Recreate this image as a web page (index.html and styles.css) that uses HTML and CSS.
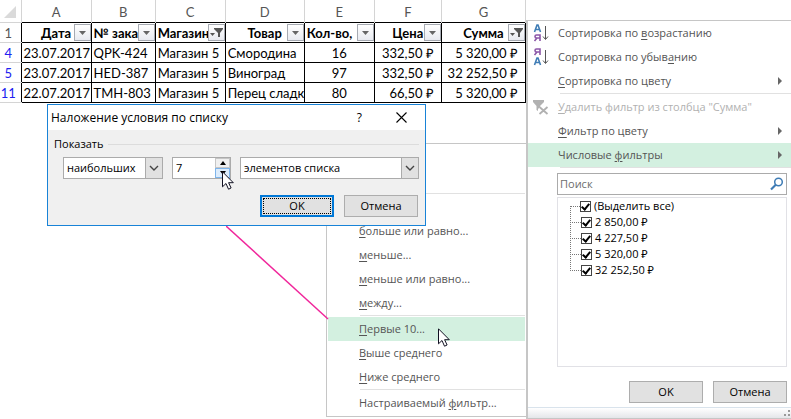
FILE: index.html
```html
<!DOCTYPE html>
<html lang="ru">

<head>
    <meta charset="UTF-8">
    <title>Фильтр по сумме</title>
    <meta name="viewport" content="width=device-width, initial-scale=1.0">
    <link rel="stylesheet" href="styles.css">
</head>

<body>
    <!-- общие значки -->
    <svg class="defs" aria-hidden="true">
        <symbol id="funnel" viewBox="0 0 15 15">
            <path d="M5 3h9v1l-3 4v4H9V8L5 4z" fill="#555"/>
            <path d="M1 8h5L3.500 11z" fill="#555"/>
        </symbol>
        <symbol id="down" viewBox="0 0 15 15">
            <path d="M4 6h7l-3.500 4z" fill="#666"/>
        </symbol>
        <symbol id="chevron" viewBox="0 0 16 20">
            <path d="M4 8l4 4 4-4" fill="none" stroke="#444" stroke-width="1.400"/>
        </symbol>
        <symbol id="cursor" viewBox="0 0 12 19">
            <path d="M.5.8v15l3.500-3.300 2.500 5.700 2.600-1.200-2.500-5.300h4.700z" fill="#fff" stroke="#112"/>
        </symbol>
    </svg>

    <div class="screen">
        <main class="sheet">
            <table>
                <colgroup>
                    <col class="col-num"><col class="col-a"><col class="col-b"><col class="col-c"><col class="col-d"><col class="col-e"><col class="col-f"><col class="col-g">
                </colgroup>
                <thead>
                    <tr class="letters">
                        <th><svg class="corner" viewBox="0 0 12 12"><path d="M12 0v12H0z" fill="#dadada"/></svg></th>
                        <th>A</th><th>B</th><th>C</th><th>D</th><th>E</th><th>F</th><th>G</th>
                    </tr>
                    <tr class="titles">
                        <th class="num first">1</th>
                        <th>Дата<button class="arrow" aria-label="Фильтр"><svg><use href="#down"/></svg></button></th>
                        <th class="left">№ зака<button class="arrow" aria-label="Фильтр"><svg><use href="#down"/></svg></button></th>
                        <th class="left">Магазин<button class="arrow" aria-label="Фильтр"><svg><use href="#funnel"/></svg></button></th>
                        <th>Товар<button class="arrow" aria-label="Фильтр"><svg><use href="#down"/></svg></button></th>
                        <th class="left">Кол-во,<button class="arrow" aria-label="Фильтр"><svg><use href="#down"/></svg></button></th>
                        <th>Цена<button class="arrow" aria-label="Фильтр"><svg><use href="#down"/></svg></button></th>
                        <th>Сумма<button class="arrow" aria-label="Фильтр"><svg><use href="#funnel"/></svg></button></th>
                    </tr>
                </thead>
                <tbody>
                    <tr>
                        <th class="num">4</th>
                        <td class="right">23.07.2017</td><td>QPK-424</td><td>Магазин 5</td><td>Смородина</td>
                        <td class="center">16</td><td class="money">332,50 ₽</td><td class="money">5 320,00 ₽</td>
                    </tr>
                    <tr>
                        <th class="num">5</th>
                        <td class="right">23.07.2017</td><td>HED-387</td><td>Магазин 5</td><td>Виноград</td>
                        <td class="center">97</td><td class="money">332,50 ₽</td><td class="money">32 252,50 ₽</td>
                    </tr>
                    <tr>
                        <th class="num">11</th>
                        <td class="right">22.07.2017</td><td>TMH-803</td><td>Магазин 5</td><td>Перец сладк</td>
                        <td class="center">80</td><td class="money">66,50 ₽</td><td class="money">5 320,00 ₽</td>
                    </tr>
                </tbody>
            </table>
        </main>

        <aside class="filter">
            <div class="menu">
                <button class="item">
                    <svg class="icon" viewBox="0 0 16 18">
                        <path d="M1.500 8L4 1h1l2.500 7M2.500 5.500h4" fill="none" stroke="#3f7cb5" stroke-width="1.600"/>
                        <path d="M7 17v-6H3.500Q2 11 2 12.500T3.500 14H7M4 14l-2.500 3" fill="none" stroke="#8c57a8" stroke-width="1.600"/>
                        <path d="M12.500 2v13M10 12.500l2.500 3 2.500-3" fill="none" stroke="#555"/>
                    </svg>
                    <span>Сортировка по <u>в</u>озрастанию</span>
                </button>
                <button class="item">
                    <svg class="icon" viewBox="0 0 16 18">
                        <path d="M7 7V1H3.500Q2 1 2 2.500T3.500 4H7M4 4L1.500 7" fill="none" stroke="#8c57a8" stroke-width="1.600"/>
                        <path d="M1.500 17L4 10h1l2.500 7M2.500 14.500h4" fill="none" stroke="#3f7cb5" stroke-width="1.600"/>
                        <path d="M12.500 2v13M10 12.500l2.500 3 2.500-3" fill="none" stroke="#555"/>
                    </svg>
                    <span>Сортировка по убыв<u>а</u>нию</span>
                </button>
                <button class="item sub"><span><u>С</u>ортировка по цвету</span></button>
                <hr>
                <button class="item off" disabled>
                    <svg class="icon" viewBox="0 0 16 18">
                        <path d="M0 2h11v2L7 8v1l-2 2v2L3.500 12V8L0 4z" fill="#b1b1b1"/>
                        <path d="M6.500 9l8 7M14.500 9l-8 7" stroke="#b1b1b1" stroke-width="1.800"/>
                    </svg>
                    <span><u>У</u>далить фильтр из столбца "Сумма"</span>
                </button>
                <button class="item sub"><span><u>Ф</u>ильтр по цвету</span></button>
                <button class="item sub active"><span>Числовые <u>ф</u>ильтры</span></button>
                <hr>
            </div>

            <div class="values">
                <div class="search">
                    <input type="text" placeholder="Поиск" aria-label="Поиск">
                    <svg viewBox="0 0 14 14"><circle cx="8.500" cy="5" r="3.800" fill="none" stroke="#3f7cb5" stroke-width="1.500"/><path d="M6 7.500L1 12.500" stroke="#3f7cb5" stroke-width="2.200"/></svg>
                </div>
                <ul class="tree">
                    <li><label><input type="checkbox" checked>(Выделить все)</label></li>
                    <li><label><input type="checkbox" checked>2 850,00 ₽</label></li>
                    <li><label><input type="checkbox" checked>4 227,50 ₽</label></li>
                    <li><label><input type="checkbox" checked>5 320,00 ₽</label></li>
                    <li><label><input type="checkbox" checked>32 252,50 ₽</label></li>
                </ul>
                <div class="buttons">
                    <button class="btn">OK</button>
                    <button class="btn">Отмена</button>
                </div>
            </div>
            <div class="grip">
                <svg viewBox="0 0 8 8"><path d="M5 0h2v2H5zM1 4h2v2H1zM5 4h2v2H5z" fill="#999"/></svg>
            </div>
        </aside>

        <div class="menu submenu">
            <div class="item"></div>
            <div class="item"></div>
            <hr>
            <div class="item"></div>
            <button class="item"><span><u>б</u>ольше или равно...</span></button>
            <button class="item"><span><u>м</u>еньше...</span></button>
            <button class="item"><span><u>м</u>еньше или равно...</span></button>
            <button class="item"><span><u>м</u>ежду...</span></button>
            <hr>
            <button class="item active"><span><u>П</u>ервые 10...</span></button>
            <button class="item"><span><u>В</u>ыше среднего</span></button>
            <button class="item"><span><u>Н</u>иже среднего</span></button>
            <hr>
            <button class="item"><span>Настраиваемый <u>ф</u>ильтр...</span></button>
        </div>

        <svg class="pointer-line" viewBox="0 0 103 94"><path d="M0 0L102 93" stroke="#f0269b" stroke-width="1.500"/></svg>

        <section class="dialog" role="dialog" aria-labelledby="dialogTitle">
            <header>
                <h1 id="dialogTitle">Наложение условия по списку</h1>
                <button aria-label="Справка">?</button>
                <button aria-label="Закрыть"><svg viewBox="0 0 11 11"><path d="M.5.5l10 10M10.500.5l-10 10" stroke="#000" stroke-width="1.100"/></svg></button>
            </header>
            <fieldset>
                <legend>Показать</legend>
                <div class="fields">
                    <div class="drop drop-kind">
                        <select aria-label="Условие"><option>наибольших</option></select>
                        <svg><use href="#chevron"/></svg>
                    </div>
                    <div class="spin">
                        <input type="text" value="7" aria-label="Количество">
                        <div class="spin-buttons">
                            <button aria-label="Больше"><svg viewBox="0 0 6 4"><path d="M0 4l3-4 3 4z"/></svg></button>
                            <button class="hot" aria-label="Меньше"><svg viewBox="0 0 6 4"><path d="M0 0l3 4 3-4z"/></svg></button>
                        </div>
                    </div>
                    <div class="drop drop-unit">
                        <select aria-label="Единицы"><option>элементов списка</option></select>
                        <svg><use href="#chevron"/></svg>
                    </div>
                </div>
            </fieldset>
            <div class="buttons">
                <button class="btn default">OK</button>
                <button class="btn">Отмена</button>
            </div>
        </section>

        <svg class="cursor cursor-spin"><use href="#cursor"/></svg>
        <svg class="cursor cursor-menu"><use href="#cursor"/></svg>
    </div>
</body>

</html>
```

FILE: styles.css
```css
* {
    box-sizing: border-box;
}

body {
    margin: 0;
    background: #fff;
    font-family: "Open Sans", "Noto Sans", sans-serif;
    font-size: 11px;
    line-height: 16px;
    color: #000;
}

button, input, select {
    font: inherit;
    color: inherit;
    margin: 0;
    padding: 0;
    border: 0;
    border-radius: 0;
    background: none;
}

svg {
    display: block;
}

.defs {
    position: absolute;
    width: 0;
    height: 0;
}

.screen {
    position: relative;
    display: flex;
    align-items: flex-start;
    overflow: hidden;
}

/* Таблица */
.sheet {
    flex: none;
    width: 526px;
}

table {
    width: 100%;
    table-layout: fixed;
    border-collapse: collapse;
    font-family: Lato, "Open Sans", sans-serif;
    font-size: 13px;
    line-height: 18px;
}

.col-num { width: 21px; }
.col-a { width: 70px; }
.col-b { width: 64px; }
.col-c { width: 70px; }
.col-d { width: 79px; }
.col-e { width: 70px; }
.col-f { width: 67px; }
.col-g { width: 84px; }

th, td {
    height: 20px;
    padding: 1px 2px 0;
    overflow: hidden;
    white-space: nowrap;
    text-align: left;
    border: 1px solid #000;
}

.letters th {
    height: 22px;
    padding-top: 3px;
    font-weight: normal;
    text-align: center;
    color: #555;
    border: 0;
    border-right: 1px solid #d4d4d4;
}

.corner {
    width: 12px;
    height: 12px;
    margin-left: 2px;
}

.titles th {
    position: relative;
    text-align: center;
}

.titles .left {
    text-align: left;
}

.num, .titles .num {
    padding: 1px 4px 0 0;
    text-align: center;
    font-weight: normal;
    color: #2020f0;
    border: 1px solid #d4d4d4;
    border-left: 0;
    border-right-color: #000;
}

.titles .first {
    color: #555;
}

.arrow {
    position: absolute;
    right: 0;
    bottom: 1px;
    width: 17px;
    height: 17px;
    border: 1px solid #a6aab2;
    background: linear-gradient(#fff, #e8eaf0);
}

.arrow svg {
    width: 15px;
    height: 15px;
}

.right {
    text-align: right;
    padding-right: 1px;
}

.center {
    text-align: center;
}

.money {
    text-align: right;
    padding-right: 7px;
}

/* Меню */
.filter {
    flex: 1;
    margin-top: 20px;
    border: 1px solid #c6c6c6;
    border-width: 1px 0 1px 2px;
    background: #fff;
}

.menu hr {
    height: 1px;
    margin: 0 0 1px 32px;
    border: 0;
    background: #e1e1e1;
}

.item {
    display: flex;
    align-items: center;
    width: 100%;
    height: 24px;
    padding-left: 30px;
    text-align: left;
    white-space: nowrap;
    color: #555;
}

.item u {
    text-underline-offset: 2px;
}

.item .icon {
    width: 16px;
    height: 18px;
    margin: 0 9px 0 -25px;
}

.item.off {
    color: #b1b1b1;
}

.item.active {
    background: #d3f0e0;
}

.sub::after {
    content: "";
    margin: 0 9px 0 auto;
    border: 4px solid transparent;
    border-left-color: #666;
    border-right: 0;
}

.values {
    padding: 4px 4px 4px 29px;
}

.search {
    display: flex;
    align-items: center;
    height: 22px;
    padding: 0 2px;
    border: 1px solid #ababab;
}

.search input {
    flex: 1;
    min-width: 0;
    outline: 0;
}

.search input::placeholder {
    color: #6d6d6d;
}

.search svg {
    width: 14px;
    height: 14px;
}

.tree {
    height: 170px;
    margin: 2px 0 14px;
    padding: 0 0 0 12px;
    list-style: none;
    border: 1px solid #e1e1e6;
}

.tree li {
    display: flex;
    align-items: center;
    height: 16px;
}

/* пунктирные ветки дерева */
.tree li::before {
    content: "";
    flex: none;
    width: 10px;
    height: 16px;
    margin-top: -16px;
    border: 1px dotted #777;
    border-width: 0 0 1px 1px;
}

.tree li:first-child::before {
    height: 1px;
    margin-top: 0;
    border-left: 0;
}

.tree label {
    display: flex;
    align-items: center;
    gap: 3px;
}

.tree input {
    appearance: none;
    display: grid;
    place-items: center;
    width: 11px;
    height: 11px;
    border: 1px solid #444;
}

.tree input:checked::before {
    content: "";
    width: 3px;
    height: 6px;
    margin-bottom: 2px;
    border: solid #000;
    border-width: 0 2px 2px 0;
    transform: rotate(40deg);
}

.buttons {
    display: flex;
    justify-content: flex-end;
    gap: 10px;
}

.btn {
    width: 74px;
    height: 22px;
    border: 1px solid #adadad;
    background: #e1e1e1;
}

.btn.default {
    border: 2px solid #0078d7;
    outline: 1px dotted #000;
    outline-offset: -4px;
}

.grip {
    display: flex;
    justify-content: flex-end;
    align-items: flex-end;
    height: 11px;
    border-top: 1px solid #d9e3ec;
    background: linear-gradient(#fff, #e4e6e9);
}

.grip svg {
    width: 8px;
    height: 8px;
}

.submenu {
    position: absolute;
    left: 326px;
    top: 143px;
    width: 202px;
    padding: 1px;
    border: 1px solid #c6c6c6;
    border-right-width: 2px;
    background: #fff;
}

.submenu .item {
    padding-left: 31px;
}

/* Диалог */
.dialog {
    position: absolute;
    left: 47px;
    top: 104px;
    width: 379px;
    border: 1px solid #1883d7;
    background: #f0f0f0;
}

.dialog header {
    display: flex;
    align-items: center;
    height: 25px;
    padding: 0 18px 0 3px;
    font-size: 12px;
    background: #fff;
}

.dialog h1 {
    flex: 1;
    margin: 0;
    font-size: 12px;
    font-weight: normal;
}

.dialog header button + button {
    margin-left: 34px;
}

.dialog header svg {
    width: 11px;
    height: 11px;
}

.dialog fieldset {
    margin: 6px 6px 0;
    padding: 5px 0 0 9px;
    border: 0;
    border-top: 1px solid #dcdcdc;
}

.dialog legend {
    margin-left: -9px;
    padding: 0 4px 0 0;
}

.fields {
    display: flex;
    gap: 9px;
}

.drop {
    position: relative;
}

.drop-kind {
    width: 100px;
}

.drop-unit {
    flex: 1;
}

.drop select {
    appearance: none;
    width: 100%;
    height: 22px;
    padding-left: 3px;
    border: 1px solid #ababab;
    background: #fff;
}

.drop svg {
    position: absolute;
    top: 0;
    right: 0;
    width: 18px;
    height: 22px;
    border: 1px solid #ababab;
    background: #e1e1e1;
    pointer-events: none;
}

.spin {
    display: flex;
    width: 59px;
    height: 22px;
    border: 1px solid #ababab;
    background: #fff;
}

.spin input {
    flex: 1;
    min-width: 0;
    padding-left: 3px;
}

.spin-buttons {
    display: flex;
    flex-direction: column;
    width: 15px;
}

.spin-buttons button {
    display: grid;
    place-items: center;
    height: 10px;
    border: 1px solid #c6c6c6;
    background: #f0f0f0;
}

.spin-buttons .hot {
    border-color: #7eb4ea;
    background: #dcecfc;
}

.spin-buttons svg {
    width: 6px;
    height: 4px;
}

.dialog .buttons {
    padding: 16px 7px 8px;
}

/* Стрелки и указатели */
.pointer-line {
    position: absolute;
    left: 226px;
    top: 226px;
    width: 103px;
    height: 94px;
}

.cursor {
    position: absolute;
    width: 12px;
    height: 19px;
}

.cursor-spin {
    left: 222px;
    top: 171px;
}

.cursor-menu {
    left: 438px;
    top: 328px;
}
```
